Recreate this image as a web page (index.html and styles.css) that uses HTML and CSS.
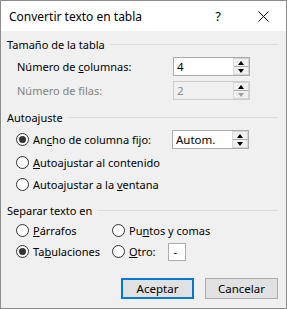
FILE: index.html
```html
<!DOCTYPE html>
<html lang="es">
<head>
<meta charset="utf-8">
<title>Convertir texto en tabla</title>
<link rel="stylesheet" href="styles.css">
</head>
<body>
<div class="dialog">
  <div class="titlebar">
    <span class="title">Convertir texto en tabla</span>
    <span class="help">?</span>
    <span class="close"><svg width="11" height="11" viewBox="0 0 11 11"><path d="M0.5 0.5 L10.5 10.5 M10.5 0.5 L0.5 10.5" stroke="#000" stroke-width="1" fill="none"/></svg></span>
  </div>
  <div class="content">
    <div class="group-head g1"><span>Tamaño de la tabla</span><i class="rule"></i></div>
    <div class="row r-cols">
      <span class="label">Número de <u>c</u>olumnas:</span>
      <div class="spin">
        <span class="spin-value">4</span>
        <div class="spin-btns"><span class="sb up"></span><span class="sb down"></span></div>
      </div>
    </div>
    <div class="row r-rows">
      <span class="label disabled">Número de filas:</span>
      <div class="spin dis">
        <span class="spin-value">2</span>
        <div class="spin-btns"><span class="sb up"></span><span class="sb down"></span></div>
      </div>
    </div>

    <div class="group-head g2"><span>Autoajuste</span><i class="rule"></i></div>
    <div class="row radio-row a1">
      <span class="radio checked"></span><span class="rtext">An<u>c</u>ho de columna fijo:</span>
      <div class="spin">
        <span class="spin-value">Autom.</span>
        <div class="spin-btns"><span class="sb up"></span><span class="sb down"></span></div>
      </div>
    </div>
    <div class="row radio-row a2"><span class="radio"></span><span class="rtext"><u>A</u>utoajustar al contenido</span></div>
    <div class="row radio-row a3"><span class="radio"></span><span class="rtext">Autoajustar a la <u>v</u>entana</span></div>

    <div class="group-head g3"><span>Separar texto en</span><i class="rule"></i></div>
    <div class="sep-grid">
      <div class="row radio-row"><span class="radio"></span><span class="rtext"><u>P</u>árrafos</span></div>
      <div class="row radio-row"><span class="radio"></span><span class="rtext">Pu<u>n</u>tos y comas</span></div>
      <div class="row radio-row"><span class="radio checked"></span><span class="rtext">Ta<u>b</u>ulaciones</span></div>
      <div class="row radio-row"><span class="radio"></span><span class="rtext"><u>O</u>tro:</span><span class="other-box">-</span></div>
    </div>

    <div class="buttons">
      <button class="btn default">Aceptar</button>
      <button class="btn">Cancelar</button>
    </div>
  </div>
</div>
</body>
</html>
```
FILE: styles.css
```css
html, body {
  margin: 0;
  padding: 0;
  background: #f0f0f0;
}
.dialog {
  width: 287px;
  height: 309px;
  box-sizing: border-box;
  border: 1px solid #8c8c8c;
  background: #f0f0f0;
  font-family: "Noto Sans", "Open Sans", sans-serif;
  font-size: 11px;
  color: #000;
  display: flex;
  flex-direction: column;
}
.titlebar {
  height: 30px;
  background: #fff;
  display: flex;
  align-items: center;
  padding-left: 8px;
}
.title {
  flex: 1;
  font-size: 12px;
}
.help {
  width: 10px;
  text-align: center;
  margin-right: 35px;
  font-size: 13px;
}
.close {
  width: 11px;
  height: 11px;
  margin-right: 17px;
  display: flex;
}
.content {
  padding: 5px 8px 0 6px;
  display: flex;
  flex-direction: column;
}
.group-head {
  height: 16px;
  display: flex;
  align-items: center;
  gap: 5px;
}
.group-head .rule {
  flex: 1;
  height: 1px;
  background: #dcdcdc;
}
.g2 { margin-top: 9px; }
.g3 { margin-top: 8px; }
.row {
  height: 19px;
  display: flex;
  align-items: center;
}
.r-cols { margin-top: 5px; padding-left: 10px; }
.r-rows { margin-top: 5px; padding-left: 10px; }
.label { width: 156px; }
.disabled { color: #838383; }
.spin {
  width: 77px;
  height: 19px;
  box-sizing: border-box;
  border: 1px solid #ababab;
  background: #fff;
  display: flex;
  align-items: center;
}
.spin-value {
  flex: 1;
  padding-left: 3px;
  font-size: 11.5px;
}
.spin.dis { background: #f0f0f0; border-color: #cccccc; }
.spin.dis .spin-value { color: #8a8a8a; }
.spin-btns {
  width: 16px;
  height: 17px;
  display: flex;
  flex-direction: column;
  border-left: 1px solid #d9d9d9;
  box-sizing: border-box;
}
.sb {
  flex: 1;
  position: relative;
  background: #f0f0f0;
  border: 1px solid #d4d4d4;
  border-left: 0;
}
.sb.up { border-bottom: 1px solid #adadad; }
.sb.down { border-top: 0; }
.sb::after {
  content: "";
  position: absolute;
  left: 4px;
  border-left: 3.5px solid transparent;
  border-right: 3.5px solid transparent;
}
.sb.up::after { top: 2px; border-bottom: 4px solid #000; }
.sb.down::after { top: 2px; border-top: 4px solid #000; }
.spin.dis .sb.down::after { border-top-color: #a0a0a0; }
.spin.dis .sb { background: #f0f0f0; }

.radio-row { padding-left: 9px; }
.radio {
  width: 13px;
  height: 13px;
  box-sizing: border-box;
  border: 1px solid #333;
  border-radius: 50%;
  background: #fff;
  margin-right: 4px;
  display: flex;
  align-items: center;
  justify-content: center;
  flex: none;
}
.radio.checked::after {
  content: "";
  width: 7px;
  height: 7px;
  border-radius: 50%;
  background: #333;
}
.a1 { margin-top: 5px; }
.a1 .rtext { width: 139px; }
.a2 { margin-top: 4px; }
.a3 { margin-top: 3px; }

.sep-grid {
  margin-top: 3px;
  display: grid;
  grid-template-columns: 96px 1fr;
  row-gap: 2px;
}
.other-box {
  width: 18px;
  height: 18px;
  box-sizing: border-box;
  border: 1px solid #ababab;
  background: #fff;
  margin-left: 12px;
  padding-left: 5px;
  line-height: 16px;
}
.buttons {
  margin-top: 17px;
  display: flex;
  justify-content: flex-end;
  gap: 11px;
}
.btn {
  width: 73px;
  height: 21px;
  box-sizing: border-box;
  border: 1px solid #adadad;
  background: #e1e1e1;
  font-family: inherit;
  font-size: 11.5px;
  color: #000;
  padding: 0;
}
.btn.default {
  border: 2px solid #0078d7;
}
```
